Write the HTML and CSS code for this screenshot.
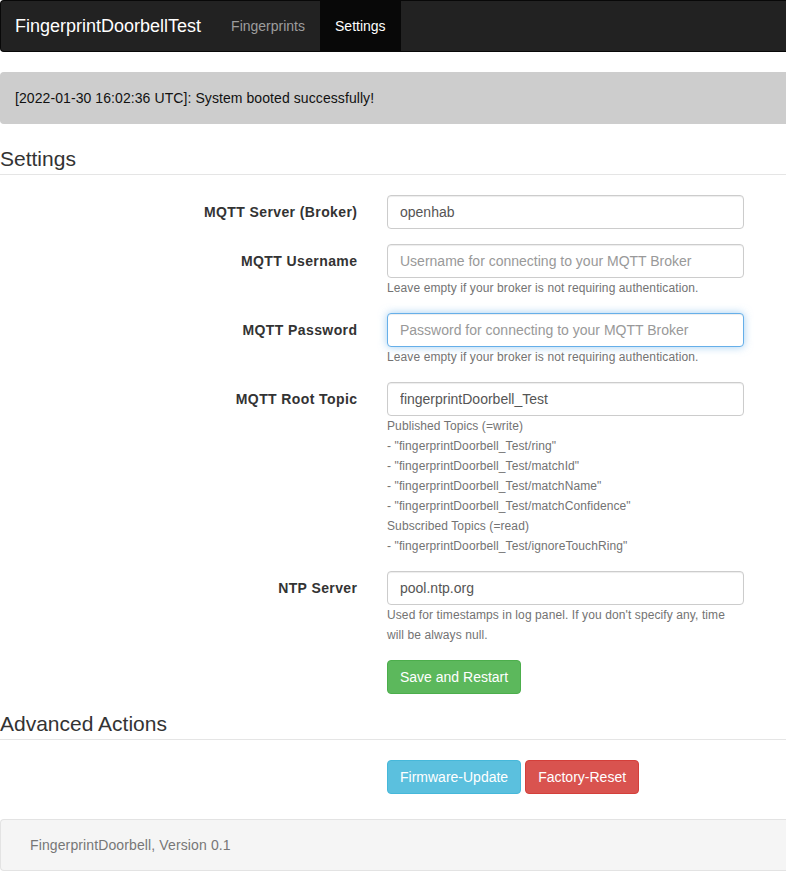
FILE: index.html
```html
<!DOCTYPE html>
<html lang="en">
<head>
<meta charset="utf-8">
<title>FingerprintDoorbell</title>
<link rel="stylesheet" href="styles.css">
</head>
<body>
<nav class="navbar">
  <a class="brand" href="#">FingerprintDoorbellTest</a>
  <ul class="nav">
    <li><a href="#">Fingerprints</a></li>
    <li class="active"><a href="#">Settings</a></li>
  </ul>
</nav>

<div class="alert">[2022-01-30 16:02:36 UTC]: System booted successfully!</div>

<form class="form">
  <fieldset>
    <legend>Settings</legend>
    <div class="form-group">
      <label class="control-label" for="mqttServer">MQTT Server (Broker)</label>
      <div class="field">
        <input class="form-control" id="mqttServer" type="text" value="openhab">
      </div>
    </div>
    <div class="form-group">
      <label class="control-label" for="mqttUser">MQTT Username</label>
      <div class="field">
        <input class="form-control" id="mqttUser" type="text" placeholder="Username for connecting to your MQTT Broker">
        <p class="help">Leave empty if your broker is not requiring authentication.</p>
      </div>
    </div>
    <div class="form-group">
      <label class="control-label" for="mqttPass">MQTT Password</label>
      <div class="field">
        <input class="form-control focus" id="mqttPass" type="password" placeholder="Password for connecting to your MQTT Broker">
        <p class="help">Leave empty if your broker is not requiring authentication.</p>
      </div>
    </div>
    <div class="form-group">
      <label class="control-label" for="mqttTopic">MQTT Root Topic</label>
      <div class="field">
        <input class="form-control" id="mqttTopic" type="text" value="fingerprintDoorbell_Test">
        <p class="help">Published Topics (=write)<br>
        - "fingerprintDoorbell_Test/ring"<br>
        - "fingerprintDoorbell_Test/matchId"<br>
        - "fingerprintDoorbell_Test/matchName"<br>
        - "fingerprintDoorbell_Test/matchConfidence"<br>
        Subscribed Topics (=read)<br>
        - "fingerprintDoorbell_Test/ignoreTouchRing"</p>
      </div>
    </div>
    <div class="form-group">
      <label class="control-label" for="ntp">NTP Server</label>
      <div class="field">
        <input class="form-control" id="ntp" type="text" value="pool.ntp.org">
        <p class="help">Used for timestamps in log panel. If you don't specify any, time will be always null.</p>
      </div>
    </div>
    <div class="form-group">
      <div></div>
      <div class="field">
        <button type="button" class="btn btn-success">Save and Restart</button>
      </div>
    </div>
  </fieldset>

  <fieldset>
    <legend>Advanced Actions</legend>
    <div class="form-group actions">
      <div></div>
      <div class="field buttons">
        <button type="button" class="btn btn-info">Firmware-Update</button>
        <button type="button" class="btn btn-danger">Factory-Reset</button>
      </div>
    </div>
  </fieldset>
</form>

<footer class="footer">FingerprintDoorbell, Version 0.1</footer>
</body>
</html>
```

FILE: styles.css
```css
* { box-sizing: border-box; }

html, body {
  margin: 0;
  padding: 0;
}

body {
  font-family: "Liberation Sans", Arial, Helvetica, sans-serif;
  font-size: 14px;
  line-height: 20px;
  color: #333;
  background: #fff;
  overflow-x: hidden;
}

/* Navbar */
.navbar {
  display: flex;
  align-items: stretch;
  height: 52px;
  background: #222;
  border: 1px solid #080808;
  border-right: none;
  border-radius: 4px 0 0 4px;
  margin-bottom: 20px;
}

.brand {
  display: block;
  padding: 15px 15px 15px 14px;
  height: 50px;
  font-size: 18px;
  line-height: 20px;
  color: #fff;
  text-decoration: none;
}

.nav {
  display: flex;
  list-style: none;
  margin: 0;
  padding: 0;
}

.nav a {
  display: block;
  padding: 15px;
  line-height: 20px;
  color: #9d9d9d;
  text-decoration: none;
}

.nav .active a {
  color: #fff;
  background: #080808;
}

/* Alert */
.alert {
  background: #cdcdcd;
  border: 1px solid #cdcdcd;
  border-right: none;
  border-radius: 4px 0 0 4px;
  padding: 15px 15px 15px 14px;
  color: #111;
  letter-spacing: 0.08px;
  margin-bottom: 20px;
}

/* Form */
.form {
  margin: 0;
}

fieldset {
  margin: 0;
  padding: 0;
  border: 0;
  min-width: 0;
}

legend {
  display: block;
  width: 100%;
  padding: 0;
  margin-bottom: 20px;
  font-size: 21px;
  line-height: 30px;
  color: #333;
  border-bottom: 1px solid #e5e5e5;
}

.form-group {
  display: grid;
  grid-template-columns: 357px 357px;
  column-gap: 30px;
  margin-bottom: 15px;
}

.form-group.actions {
  margin-bottom: 25px;
}

.control-label {
  text-align: right;
  font-weight: bold;
  padding-top: 7px;
  line-height: 20px;
  letter-spacing: 0.4px;
  margin-right: -0.4px;
}

.field {
  min-width: 0;
}

.form-control {
  display: block;
  width: 100%;
  height: 34px;
  padding: 6px 12px;
  font-family: inherit;
  font-size: 14px;
  line-height: 20px;
  color: #555;
  background: #fff;
  border: 1px solid #ccc;
  border-radius: 4px;
  box-shadow: inset 0 1px 1px rgba(0, 0, 0, .075);
  outline: none;
}

.form-control::placeholder {
  color: #999;
}

.form-control.focus {
  border-color: #66afe9;
  box-shadow: inset 0 1px 1px rgba(0, 0, 0, .075), 0 0 8px rgba(102, 175, 233, .6);
}

.help {
  margin: 0;
  font-size: 12px;
  line-height: 20px;
  letter-spacing: 0.1px;
  color: #737373;
}

/* Buttons */
.buttons {
  display: flex;
  gap: 4px;
}

.btn {
  display: inline-block;
  height: 34px;
  padding: 6px 12px;
  font-family: inherit;
  font-size: 14px;
  line-height: 20px;
  color: #fff;
  border: 1px solid transparent;
  border-radius: 4px;
  cursor: pointer;
}

.btn-success {
  background: #5cb85c;
  border-color: #4cae4c;
}

.btn-info {
  background: #5bc0de;
  border-color: #46b8da;
}

.btn-danger {
  background: #d9534f;
  border-color: #d43f3a;
}

/* Footer */
.footer {
  background: #f5f5f5;
  border: 1px solid #e3e3e3;
  border-right: none;
  border-radius: 4px 0 0 4px;
  padding: 15px 15px 15px 29px;
  color: #777;
  letter-spacing: 0.12px;
}
```
